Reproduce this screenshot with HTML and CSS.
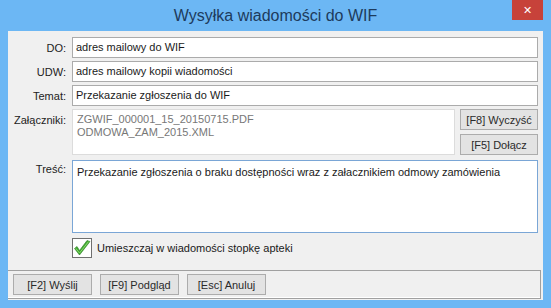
FILE: index.html
```html
<!DOCTYPE html>
<html lang="pl">
<head>
  <meta charset="UTF-8">
  <title>Wysyłka wiadomości do WIF</title>
  <link rel="stylesheet" href="styles.css">
</head>
<body>
  <div class="window">
    <div class="titlebar">
      <span class="title">Wysyłka wiadomości do WIF</span>
      <button class="close">&#x2715;</button>
    </div>

    <div class="client">
      <div class="form">
        <label class="lbl">DO:</label>
        <div class="field">adres mailowy do WIF</div>

        <label class="lbl">UDW:</label>
        <div class="field">adres mailowy kopii wiadomości</div>

        <label class="lbl">Temat:</label>
        <div class="field">Przekazanie zgłoszenia do WIF</div>

        <label class="lbl lbl-top">Załączniki:</label>
        <div class="attach-row">
          <div class="field attachments">
            <div>ZGWIF_000001_15_20150715.PDF</div>
            <div>ODMOWA_ZAM_2015.XML</div>
          </div>
          <div class="attach-buttons">
            <button class="btn">[F8] Wyczyść</button>
            <button class="btn">[F5] Dołącz</button>
          </div>
        </div>

        <label class="lbl lbl-top">Treść:</label>
        <div class="field body-text">Przekazanie zgłoszenia o braku dostępności wraz z załacznikiem odmowy zamówienia</div>

        <span></span>
        <div class="check-row">
          <span class="checkbox">
            <svg width="18" height="18" viewBox="0 0 18 18">
              <path d="M1.5 9.5 L6.5 16 L17 2.5 L14 1.5 L6.5 11.5 L4 7.5 Z" fill="#3fa832" stroke="#2b7f22" stroke-width="0.6"/>
              <path d="M2.8 9.4 L6.5 14 L15.5 2.6" fill="none" stroke="#93de72" stroke-width="0.9"/>
            </svg>
          </span>
          <span>Umieszczaj w wiadomości stopkę apteki</span>
        </div>
      </div>

      <div class="footer">
        <button class="btn">[F2] Wyślij</button>
        <button class="btn">[F9] Podgląd</button>
        <button class="btn">[Esc] Anuluj</button>
      </div>
    </div>
  </div>
</body>
</html>
```

FILE: styles.css
```css
body {
  margin: 0;
  font-family: 'Liberation Sans', Arial, sans-serif;
  font-size: 11px;
  color: #1a1a1a;
}
.window {
  width: 551px;
  height: 308px;
  box-sizing: border-box;
  background: #6cb7f4;
  padding: 0 8px 8px 8px;
  position: relative;
}
.titlebar {
  height: 31px;
  display: flex;
  align-items: center;
  justify-content: center;
}
.title {
  font-size: 16px;
  color: #1d3b5c;
  margin-top: 1px;
}
.close {
  position: absolute;
  top: 0;
  right: 8px;
  width: 31px;
  height: 20px;
  border: none;
  background: #c7423a;
  color: white;
  font-size: 11px;
  font-weight: bold;
  padding: 0;
  font-family: 'DejaVu Sans', sans-serif;
}
.client {
  background: #f0f0f0;
  height: 269px;
  display: flex;
  flex-direction: column;
}
.form {
  display: grid;
  grid-template-columns: 58px 1fr;
  column-gap: 6px;
  row-gap: 3px;
  padding: 6px 5px 0 0;
}
.lbl {
  text-align: right;
  align-self: center;
  color: #222;
}
.lbl-top {
  align-self: start;
  padding-top: 5px;
}
.field {
  height: 21px;
  box-sizing: border-box;
  background: #fff;
  border: 1px solid #ababab;
  padding: 3px 3px;
  line-height: 13px;
  white-space: nowrap;
  overflow: hidden;
}
.attach-row {
  display: flex;
  gap: 5px;
}
.attachments {
  flex: 1;
  height: 46px;
  border-color: #dcdcdc;
  color: #777;
  padding: 3px 4px;
}
.attach-buttons {
  display: flex;
  flex-direction: column;
  gap: 4px;
}
.attach-buttons .btn {
  width: 78px;
}
.body-text {
  height: 73px;
  margin-top: 2px;
  border-color: #7aa6d6;
  padding: 5px 4px;
}
.check-row {
  display: flex;
  align-items: center;
  gap: 5px;
  margin-top: 2px;
}
.checkbox {
  width: 18px;
  height: 18px;
  border: 1px solid #6f6f6f;
  background: #fff;
  display: flex;
}
.btn {
  height: 21px;
  box-sizing: border-box;
  background: #e3e3e3;
  border: 1px solid #acacac;
  font-family: 'Liberation Sans', Arial, sans-serif;
  font-size: 11px;
  color: #2a2a2a;
  padding: 0 2px;
  white-space: nowrap;
}
.footer {
  margin: auto 2px 1px 0;
  height: 29px;
  box-sizing: border-box;
  border: 1px solid #a0a0a0;
  border-left: none;
  box-shadow: inset 0 -1px 0 #fff;
  display: flex;
  align-items: center;
  gap: 8px;
  padding-left: 5px;
}
.footer .btn {
  width: 79px;
}
```
